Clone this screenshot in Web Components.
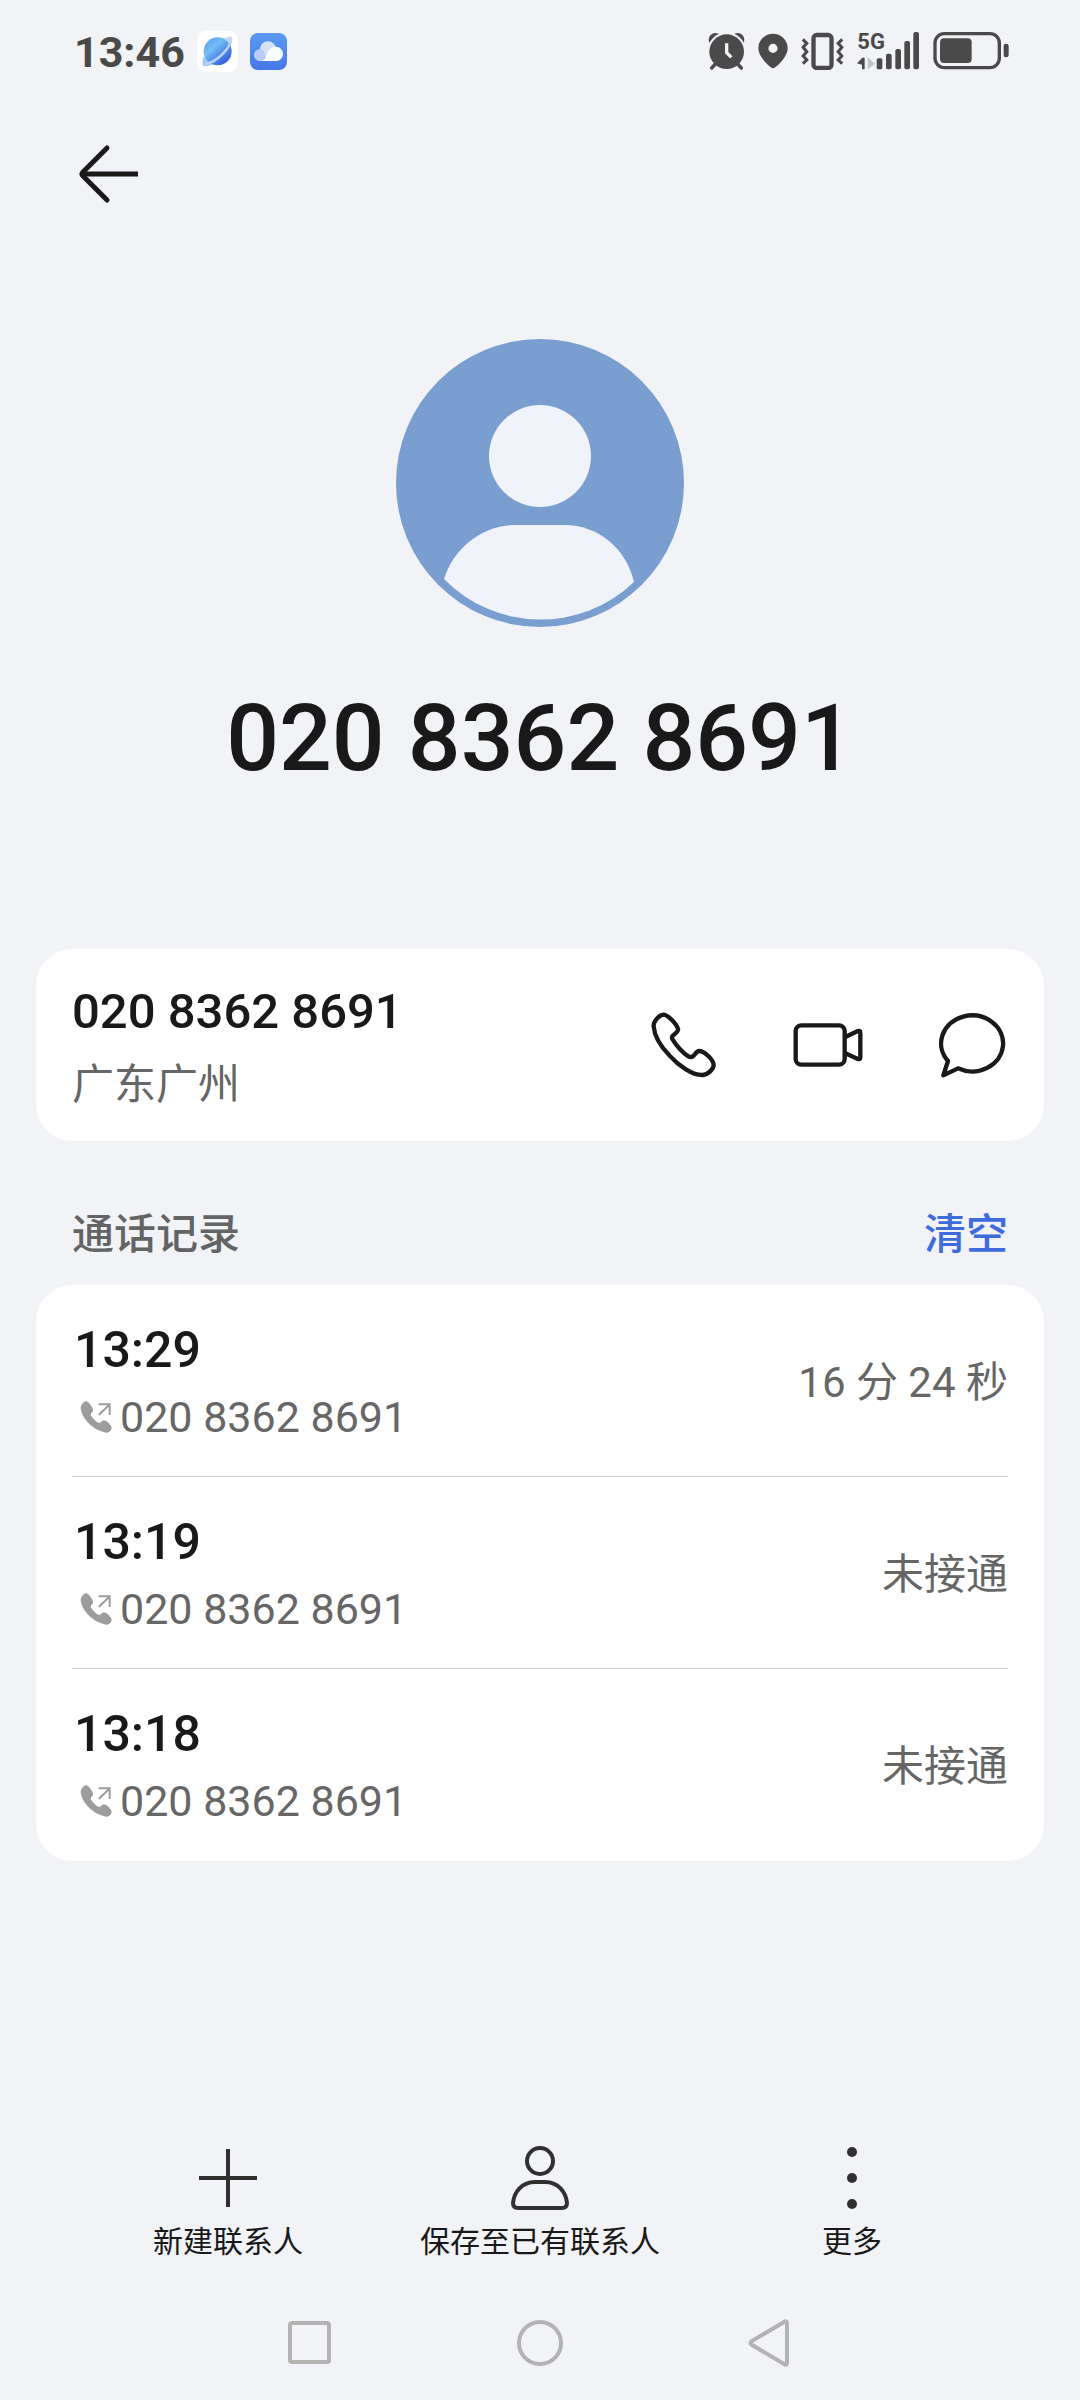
<!DOCTYPE html>
<html lang="zh-CN">
<head>
<meta charset="utf-8">
<meta name="viewport" content="width=device-width, initial-scale=1">
<title>020 8362 8691</title>
<style>
  body {
    margin: 0;
    background-color: #f1f3f7;
    color: #191919;
    font-family: Roboto, "Noto Sans CJK SC", sans-serif;
  }
</style>
</head>
<body>
<contact-page>
  <status-bar slot="top" time="13:46"></status-bar>
  <app-bar slot="top"></app-bar>
  <contact-header number="020 8362 8691"></contact-header>
  <phone-card number="020 8362 8691" region="广东广州"></phone-card>
  <call-history heading="通话记录" action="清空">
    <call-entry time="13:29" number="020 8362 8691">16 分 24 秒</call-entry>
    <call-entry time="13:19" number="020 8362 8691">未接通</call-entry>
    <call-entry time="13:18" number="020 8362 8691">未接通</call-entry>
  </call-history>
  <tool-bar slot="bottom">
    <tool-item icon="plus">新建联系人</tool-item>
    <tool-item icon="person">保存至已有联系人</tool-item>
    <tool-item icon="more">更多</tool-item>
  </tool-bar>
  <system-nav slot="bottom"></system-nav>
</contact-page>

<script>
const buttonReset = `
  button {
    margin: 0;
    padding: 0;
    border: 0;
    background: none;
    color: inherit;
    font: inherit;
    cursor: pointer;
  }
  svg {
    display: block;
  }
`;

// Base class: renders the markup returned by render() into an open shadow root
class BaseElement extends HTMLElement {
  constructor() {
    super();
    this.attachShadow({ mode: "open" });
  }

  connectedCallback() {
    const template = document.createElement("template");
    template.innerHTML = `<style>${buttonReset}</style>` + this.render();
    this.shadowRoot.replaceChildren(template.content.cloneNode(true));
  }

  attr(name) {
    return this.getAttribute(name) || "";
  }
}

class ContactPage extends BaseElement {
  render() {
    return `
      <style>
        :host {
          display: flex;
          flex-direction: column;
          min-height: 100vh;
        }
        main {
          flex: 1;
          padding: 0 36px;
        }
      </style>
      <slot name="top"></slot>
      <main><slot></slot></main>
      <slot name="bottom"></slot>
    `;
  }
}

class StatusBar extends BaseElement {
  render() {
    return `
      <style>
        :host {
          display: flex;
          align-items: center;
          justify-content: space-between;
          height: 102px;
          padding: 0 71px 0 74px;
          color: #4a4a4a;
        }
        .left, .right {
          display: flex;
          align-items: center;
          gap: 12px;
        }
        .right {
          gap: 13px;
        }
        time {
          padding-top: 2px;
          font-size: 43px;
          font-weight: 700;
          line-height: 52px;
        }
        .right svg {
          fill: currentColor;
        }
        text {
          font-size: 66px;
          font-weight: 700;
        }
      </style>
      <div class="left">
        <time>${this.attr("time")}</time>
        <svg width="41" height="41" viewBox="0 0 123 123" aria-hidden="true">
          <defs>
            <linearGradient id="planet" x1="0.1" y1="0.1" x2="0.8" y2="0.9">
              <stop offset="0" stop-color="#5fa4f2"/>
              <stop offset="0.35" stop-color="#72bdf3"/>
              <stop offset="0.7" stop-color="#4c86ea"/>
              <stop offset="1" stop-color="#3560dd"/>
            </linearGradient>
          </defs>
          <rect width="123" height="123" rx="28" fill="#fff"/>
          <path d="M76 24C90 16 102 14 105 20C108 28 104 40 98 50Z" fill="#d3dbf8"/>
          <path d="M20 76C15 92 16 103 20 105C30 106 40 103 50 98Z" fill="#9fc9f6"/>
          <circle cx="62" cy="61" r="42" fill="url(#planet)"/>
          <path d="M98 24C108 42 64 92 26 99" fill="none" stroke="#b9d2f9" stroke-width="8" stroke-linecap="round"/>
        </svg>
        <svg width="37" height="37" viewBox="0 0 111 111" aria-hidden="true">
          <defs>
            <linearGradient id="sky" x1="0" y1="0" x2="0" y2="1">
              <stop offset="0" stop-color="#5a9af3"/>
              <stop offset="1" stop-color="#4676e8"/>
            </linearGradient>
          </defs>
          <rect width="111" height="111" rx="24" fill="url(#sky)"/>
          <circle cx="54" cy="50" r="25" fill="#d3e3fc"/>
          <path d="M29 49C40 49 46 57 46 66C46 76 40 84 30 84C20 84 12 76 12 66C12 57 19 49 29 49Z" fill="#b9cffa"/>
          <path d="M32 84C56 80 46 42 78 41C90 41 99 51 99 62C99 74 90 84 78 84Z" fill="#fafcff"/>
        </svg>
      </div>
      <div class="right">
        <svg width="37" height="38" viewBox="0 0 111 114" aria-hidden="true">
          <circle cx="22" cy="23" r="20"/>
          <circle cx="89" cy="23" r="20"/>
          <circle cx="56" cy="59" r="58" fill="#f1f3f7"/>
          <path d="M22 96L11 108M89 96L100 108" stroke="currentColor" stroke-width="10" stroke-linecap="round"/>
          <circle cx="56" cy="59" r="52"/>
          <path d="M56 34V62L70 76" fill="none" stroke="#f1f3f7" stroke-width="10"/>
        </svg>
        <svg width="30" height="38" viewBox="0 0 92 114" aria-hidden="true">
          <path fill-rule="evenodd" d="M46 110C39 110 1 76 1 49A45 45 0 1 1 91 49C91 76 53 110 46 110ZM46 35A14 14 0 1 0 46 63A14 14 0 1 0 46 35Z"/>
        </svg>
        <svg width="43" height="38" viewBox="0 0 128 114" aria-hidden="true">
          <g fill="none" stroke="currentColor">
            <rect x="37" y="9" width="54" height="99" rx="10" stroke-width="13"/>
            <path d="M5 22L17 34L6 46L17 59L6 72L17 84L5 95M123 22L111 34L122 46L111 59L122 72L111 84L123 95" stroke-width="9"/>
          </g>
        </svg>
        <svg width="63" height="50" viewBox="0 -18 189 150" aria-label="5G">
          <text x="1" y="52">5G</text>
          <path d="M0 94L15 78Q23 74 23 80V112H15V98Z"/>
          <path d="M32 75L54 96L32 112Z" fill="#c3c4c7"/>
          <rect x="59" y="79" width="17" height="33" rx="5"/>
          <rect x="87" y="65" width="17" height="47" rx="6"/>
          <rect x="115" y="51" width="17" height="61" rx="6"/>
          <rect x="142" y="27" width="17" height="85" rx="6"/>
          <rect x="169" y="0" width="17" height="112" rx="6"/>
        </svg>
        <svg width="76" height="38" viewBox="0 0 228 114" aria-hidden="true">
          <rect x="6" y="5" width="193" height="102" rx="28" fill="none" stroke="currentColor" stroke-width="10"/>
          <rect x="21" y="19" width="95" height="74" rx="12"/>
          <rect x="212" y="35" width="15" height="41" rx="7"/>
        </svg>
      </div>
    `;
  }
}

class AppBar extends BaseElement {
  render() {
    return `
      <style>
        :host {
          display: flex;
          align-items: center;
          height: 144px;
          padding: 0 72px;
        }
      </style>
      <button aria-label="返回">
        <svg width="72" height="72" viewBox="0 0 72 72" fill="none" stroke="currentColor" stroke-width="5" stroke-linecap="round" stroke-linejoin="round">
          <path d="M35 10L11 34Q9 36 11 38L35 62"/>
          <path d="M11 36H66" stroke-linecap="butt"/>
        </svg>
      </button>
    `;
  }
}

class ContactHeader extends BaseElement {
  render() {
    return `
      <style>
        :host {
          display: flex;
          flex-direction: column;
          align-items: center;
          padding: 93px 0 150px;
        }
        h1 {
          margin: 52px 0 0;
          font-size: 93px;
          font-weight: 500;
          line-height: 120px;
        }
      </style>
      <svg width="288" height="288" viewBox="0 0 288 288" aria-hidden="true">
        <circle cx="144" cy="144" r="144" fill="#7b9ed1"/>
        <circle cx="144" cy="117" r="51" fill="#f0f4fa"/>
        <path d="M48 240C58 208 87 186 120 186H168C202 186 230 209 238 243A135 135 0 0 1 48 240Z" fill="#f0f4fa"/>
      </svg>
      <h1>${this.attr("number")}</h1>
    `;
  }
}

class PhoneCard extends BaseElement {
  render() {
    return `
      <style>
        :host {
          display: flex;
          align-items: center;
          justify-content: space-between;
          padding: 0 36px;
          border-radius: 36px;
          background-color: #fff;
        }
        .info {
          padding: 34px 0 28px;
        }
        .number {
          font-size: 49px;
          font-weight: 500;
          line-height: 58px;
        }
        .region {
          margin-top: 16px;
          color: #666;
          font-size: 42px;
          line-height: 56px;
        }
        .actions {
          display: flex;
          gap: 72px;
        }
        svg {
          width: 72px;
          height: 72px;
          fill: none;
          stroke: currentColor;
          stroke-width: 13;
          stroke-linecap: round;
          stroke-linejoin: round;
        }
      </style>
      <div class="info">
        <div class="number">${this.attr("number")}</div>
        <div class="region">${this.attr("region")}</div>
      </div>
      <div class="actions">
        <button aria-label="拨打电话">
          <svg viewBox="0 0 216 216">
            <path d="M46 17C34 18 16 36 17 52C19 80 40 114 64 139C92 170 132 199 164 198C180 197 197 180 197 168C196 152 170 126 153 126C147 126 141 136 136 141C131 145 126 145 121 142C105 132 83 108 73 90C70 84 73 80 79 76C86 70 92 66 90 60C86 46 60 17 46 17Z"/>
          </svg>
        </button>
        <button aria-label="视频通话">
          <svg viewBox="0 0 216 216">
            <rect x="11" y="49" width="147" height="118" rx="17"/>
            <path d="M160 84L196 67Q205 63 205 71V145Q205 153 196 149L160 133"/>
          </svg>
        </button>
        <button aria-label="发送信息">
          <svg viewBox="0 0 216 216">
            <path d="M36 156A93 84 0 1 1 66 178L22 199Z"/>
          </svg>
        </button>
      </div>
    `;
  }
}

class CallHistory extends BaseElement {
  render() {
    return `
      <style>
        :host {
          display: block;
        }
        header {
          display: flex;
          justify-content: space-between;
          padding: 66px 36px 22px;
          font-size: 42px;
          line-height: 56px;
        }
        h2 {
          margin: 0;
          color: #636465;
          font-size: inherit;
          font-weight: 500;
        }
        button {
          color: #3f6cdd;
          font-weight: 500;
        }
        .list {
          padding: 0 36px;
          border-radius: 36px;
          background-color: #fff;
        }
      </style>
      <header>
        <h2>${this.attr("heading")}</h2>
        <button>${this.attr("action")}</button>
      </header>
      <div class="list" role="list"><slot></slot></div>
    `;
  }
}

class CallEntry extends BaseElement {
  connectedCallback() {
    super.connectedCallback();
    this.setAttribute("role", "listitem");
  }

  render() {
    return `
      <style>
        :host {
          display: flex;
          align-items: center;
          justify-content: space-between;
          box-sizing: border-box;
          min-height: 192px;
          padding: 36px 0 31px;
          border-bottom: 1px solid #ccc;
        }
        :host(:last-of-type) {
          border-bottom-color: transparent;
        }
        time {
          display: block;
          margin-left: 2px;
          font-size: 50px;
          font-weight: 500;
          line-height: 58px;
        }
        .number {
          display: flex;
          align-items: center;
          margin: 10px 0 0 6px;
          gap: 6px;
          color: #666;
          font-size: 43px;
          line-height: 56px;
        }
        .result {
          color: #666;
          font-size: 42px;
          line-height: 56px;
        }
      </style>
      <div>
        <time>${this.attr("time")}</time>
        <div class="number">
          <svg width="36" height="36" viewBox="0 0 108 108" fill="#9d9d9d" aria-hidden="true">
            <path d="M24 7C17 8 8 17 8 28C12 62 50 97 86 101C94 101 101 92 101 86C98 75 85 65 78 64C71 64 69 73 63 72C54 68 42 56 38 47C38 42 46 38 45 32C42 22 31 7 24 7Z"/>
            <path d="M62 48L94 17M62 16H95V48" fill="none" stroke="#9d9d9d" stroke-width="6"/>
          </svg>
          <span>${this.attr("number")}</span>
        </div>
      </div>
      <div class="result"><slot></slot></div>
    `;
  }
}

class ToolBar extends BaseElement {
  render() {
    return `
      <style>
        :host {
          display: grid;
          grid-template-columns: repeat(3, 1fr);
          padding: 0 72px 24px;
        }
      </style>
      <slot></slot>
    `;
  }
}

const toolIcons = {
  plus: `<path d="M36 7V65M7 36H65" stroke-width="4"/>`,
  person: `
    <ellipse cx="36" cy="19" rx="13" ry="13"/>
    <path d="M31 40H41C54 40 62 50 63 61Q63 66 58 66H14Q9 66 9 61C10 50 18 40 31 40Z"/>
  `,
  more: `
    <g fill="currentColor" stroke="none">
      <circle cx="36" cy="10" r="5"/>
      <circle cx="36" cy="36" r="5"/>
      <circle cx="36" cy="62" r="5"/>
    </g>
  `
};

class ToolItem extends BaseElement {
  render() {
    return `
      <style>
        :host {
          display: flex;
          justify-content: center;
        }
        button {
          display: flex;
          flex-direction: column;
          align-items: center;
          gap: 8px;
          font-size: 30px;
          line-height: 40px;
          white-space: nowrap;
        }
        svg {
          color: #303030;
        }
      </style>
      <button>
        <svg width="72" height="72" viewBox="0 0 72 72" fill="none" stroke="currentColor" stroke-width="4" aria-hidden="true">
          ${toolIcons[this.attr("icon")]}
        </svg>
        <span><slot></slot></span>
      </button>
    `;
  }
}

class SystemNav extends BaseElement {
  render() {
    return `
      <style>
        :host {
          display: grid;
          grid-template-columns: repeat(3, 1fr);
          align-items: center;
          justify-items: center;
          height: 114px;
          padding: 0 18%;
        }
        svg {
          fill: none;
          stroke: #b3b3b3;
          stroke-width: 4;
          stroke-linejoin: round;
        }
      </style>
      <button aria-label="最近任务">
        <svg width="48" height="48" viewBox="0 0 48 48"><rect x="4" y="4" width="39" height="39" rx="2"/></svg>
      </button>
      <button aria-label="主屏幕">
        <svg width="48" height="48" viewBox="0 0 48 48"><circle cx="24" cy="24" r="21"/></svg>
      </button>
      <button aria-label="返回">
        <svg width="48" height="48" viewBox="0 0 48 48"><path d="M6 22Q3 24 6 26L38 45Q41 47 41 43V5Q41 1 38 3Z"/></svg>
      </button>
    `;
  }
}

window.customElements.define("contact-page", ContactPage);
window.customElements.define("status-bar", StatusBar);
window.customElements.define("app-bar", AppBar);
window.customElements.define("contact-header", ContactHeader);
window.customElements.define("phone-card", PhoneCard);
window.customElements.define("call-history", CallHistory);
window.customElements.define("call-entry", CallEntry);
window.customElements.define("tool-bar", ToolBar);
window.customElements.define("tool-item", ToolItem);
window.customElements.define("system-nav", SystemNav);
</script>
</body>
</html>
